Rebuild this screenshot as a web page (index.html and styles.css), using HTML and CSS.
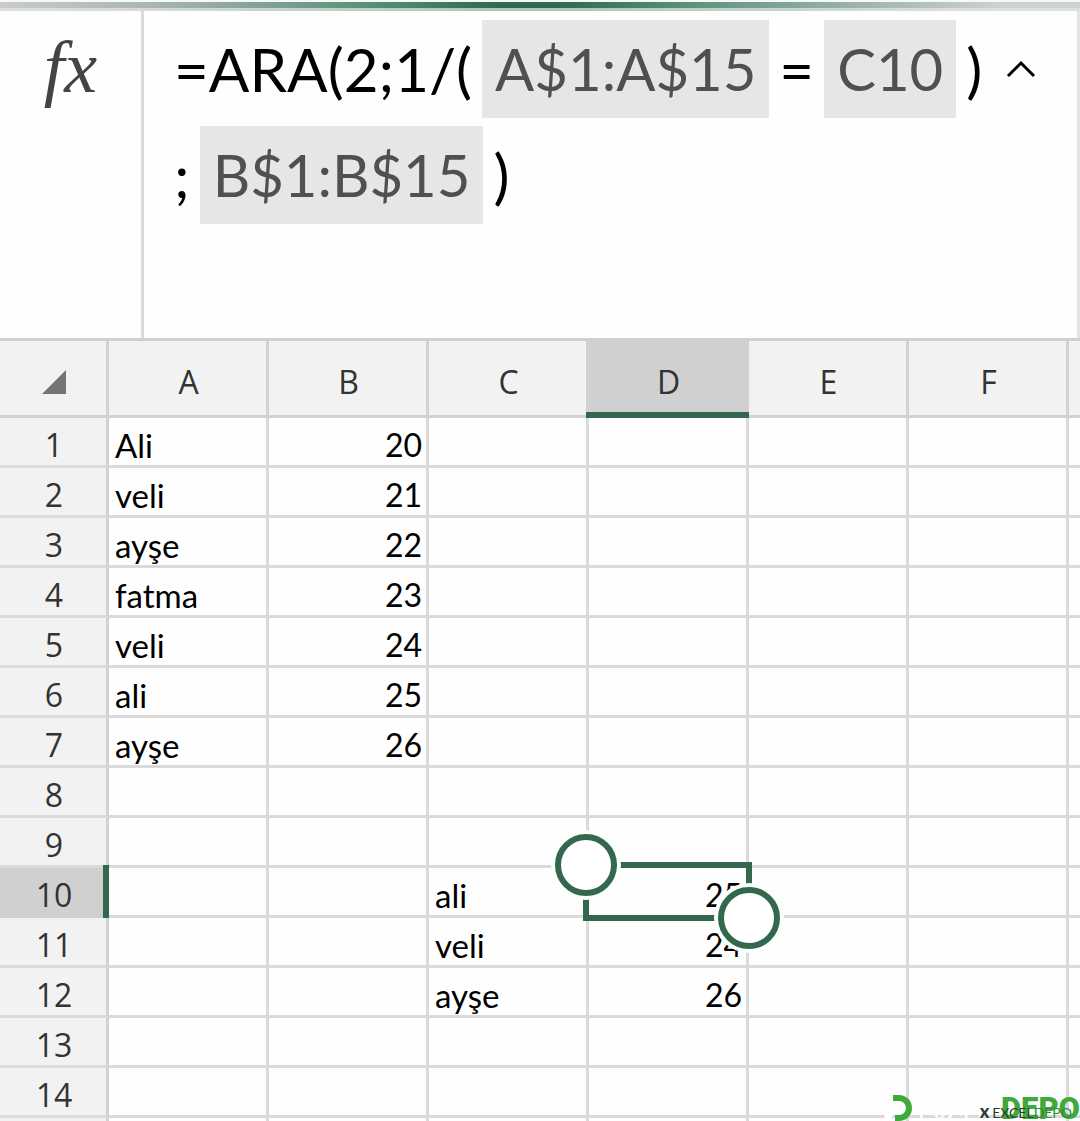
FILE: index.html
```html
<!DOCTYPE html>
<html lang="tr">
<head>
  <meta charset="UTF-8" />
  <meta name="viewport" content="width=device-width, initial-scale=1.0"/>
  <title>Excel - ARA</title>
  <link rel="stylesheet" href="styles.css">
</head>
<body>

  <div class="ribbon-edge"></div>

  <!-- Formula Bar -->
  <div class="formula-bar">
    <div class="fx">fx</div>
    <div class="formula" role="textbox" aria-label="Formül">
      <div class="formula-line">
        <span>=ARA(2;1/(</span>
        <span class="ref">A$1:A$15</span>
        <span>=</span>
        <span class="ref">C10</span>
        <span>)</span>
      </div>
      <div class="formula-line">
        <span>;</span>
        <span class="ref">B$1:B$15</span>
        <span>)</span>
      </div>
    </div>
    <button class="collapse" type="button" aria-label="Daralt">
      <svg width="30" height="18" viewBox="0 0 30 18"><path d="M2 16 L15 3 L28 16" fill="none" stroke="#000" stroke-width="3"/></svg>
    </button>
  </div>

  <!-- Sheet -->
  <table class="sheet">
    <colgroup>
      <col class="col-head">
      <col class="col"><col class="col"><col class="col">
      <col class="col"><col class="col"><col class="col">
      <col>
    </colgroup>
    <thead>
      <tr>
        <th class="corner"><svg width="24" height="24" viewBox="0 0 24 24"><path d="M24 0 V24 H0 Z" fill="#747474"/></svg></th>
        <th scope="col">A</th><th scope="col">B</th><th scope="col">C</th><th scope="col" class="active">D</th><th scope="col">E</th><th scope="col">F</th><th></th>
      </tr>
    </thead>
    <tbody>
      <tr><th scope="row">1</th><td>Ali</td><td class="num">20</td><td></td><td></td><td></td><td></td><td></td></tr>
      <tr><th scope="row">2</th><td>veli</td><td class="num">21</td><td></td><td></td><td></td><td></td><td></td></tr>
      <tr><th scope="row">3</th><td>ayşe</td><td class="num">22</td><td></td><td></td><td></td><td></td><td></td></tr>
      <tr><th scope="row">4</th><td>fatma</td><td class="num">23</td><td></td><td></td><td></td><td></td><td></td></tr>
      <tr><th scope="row">5</th><td>veli</td><td class="num">24</td><td></td><td></td><td></td><td></td><td></td></tr>
      <tr><th scope="row">6</th><td>ali</td><td class="num">25</td><td></td><td></td><td></td><td></td><td></td></tr>
      <tr><th scope="row">7</th><td>ayşe</td><td class="num">26</td><td></td><td></td><td></td><td></td><td></td></tr>
      <tr><th scope="row">8</th><td></td><td></td><td></td><td></td><td></td><td></td><td></td></tr>
      <tr><th scope="row">9</th><td></td><td></td><td></td><td></td><td></td><td></td><td></td></tr>
      <tr>
        <th scope="row" class="active">10</th><td></td><td></td><td>ali</td>
        <td class="num selected">25
          <div class="selection">
            <span class="handle start"></span>
            <span class="handle end"></span>
          </div>
        </td>
        <td></td><td></td><td></td>
      </tr>
      <tr><th scope="row">11</th><td></td><td></td><td>veli</td><td class="num">24</td><td></td><td></td><td></td></tr>
      <tr><th scope="row">12</th><td></td><td></td><td>ayşe</td><td class="num">26</td><td></td><td></td><td></td></tr>
      <tr><th scope="row">13</th><td></td><td></td><td></td><td></td><td></td><td></td><td></td></tr>
      <tr><th scope="row">14</th><td></td><td></td><td></td><td></td><td></td><td></td><td></td></tr>
      <tr><th scope="row"></th><td></td><td></td><td></td><td></td><td></td><td></td><td></td></tr>
    </tbody>
  </table>

  <!-- Watermark -->
  <div class="watermark">
    <svg class="mark-arc" width="28" height="26" viewBox="0 0 28 26">
      <path d="M0 26 L10 15" stroke="#fff" stroke-width="6"/>
      <path d="M9 3 H15 A10 10 0 0 1 15 23 H11" fill="none" stroke="#3fa93c" stroke-width="6"/>
    </svg>
    <span class="mark-ghost">EXCEL</span>
    <span class="mark-big">DEPO</span>
    <span class="mark-small"><b>x</b>EXCEL<i>DEPO</i></span>
  </div>

</body>
</html>
```
FILE: styles.css
```css
* {
  box-sizing: border-box;
}

body {
  margin: 0;
  height: 100vh;
  overflow: hidden;
  position: relative;
  font-family: Lato, 'Liberation Sans', sans-serif;
  background-color: #fefefe;
  color: #000;
}

.ribbon-edge {
  height: 11px;
  border-top: 2px solid #f4faf7;
  background:
    linear-gradient(rgba(255, 255, 255, 0) 6px, rgba(225, 235, 230, 0.7) 6px),
    linear-gradient(90deg, #cbcbcb 0%, #a9b3ae 15%, #5e927b 33%, #2f6b50 46%, #2f6b50 52%, #5e927b 64%, #a9b8b1 82%, #d0d2d0 93%);
}

/* Formula bar */
.formula-bar {
  display: flex;
  align-items: flex-start;
  height: 327px;
  border-right: 3px solid #e4e4e4;
}

.fx {
  width: 144px;
  height: 100%;
  flex-shrink: 0;
  padding-top: 16px;
  border-right: 3px solid #dadcdb;
  font-family: 'Liberation Serif', serif;
  font-size: 74px;
  line-height: 80px;
  font-style: italic;
  text-align: center;
  color: #444;
}

.formula {
  flex: 1;
  display: flex;
  flex-direction: column;
  gap: 8px;
  padding: 9px 0 0 30px;
  font-size: 60px;
  line-height: 98px;
  white-space: nowrap;
}

.formula-line {
  display: flex;
  gap: 10px;
}

.ref {
  padding: 0 13px;
  background: #e6e6e6;
  color: #505050;
  font-size: 58px;
}

.collapse {
  margin: 49px 41px 0 0;
  padding: 0;
  border: 0;
  background: none;
  line-height: 0;
}

/* Sheet */
.sheet {
  width: 100%;
  table-layout: fixed;
  border-collapse: separate;
  border-spacing: 0;
  border-top: 3px solid #d0d0d0;
  font-size: 33px;
  line-height: 40px;
}

.col-head {
  width: 109px;
}

.col {
  width: 160px;
}

.sheet th,
.sheet td {
  height: 50px;
  padding: 6px 4px 0 6px;
  border-right: 3px solid #dadada;
  border-bottom: 3px solid #dadada;
  text-align: left;
  white-space: nowrap;
}

.sheet th {
  position: relative;
  padding: 6px 0 0 2px;
  border-color: #d2d2d2;
  background: #f2f2f2;
  color: #333;
  font-family: 'Open Sans', sans-serif;
  font-size: 32px;
  font-weight: 400;
  text-align: center;
}

.sheet tbody th {
  border-bottom-color: #dadada;
}

.sheet thead th {
  height: 77px;
  padding-top: 8px;
}

.sheet th:last-child,
.sheet td:last-child {
  border-right: 0;
}

.sheet .num {
  font-size: 32px;
  text-align: right;
}

.corner svg {
  display: block;
  margin: 0 auto;
}

.sheet th.active {
  border-color: #d0d0d0;
  background: #d0d0d0;
}

.active::after {
  content: '';
  position: absolute;
  background: #33684f;
}

thead .active::after {
  left: -3px;
  right: -3px;
  bottom: -3px;
  height: 6px;
}

tbody .active::after {
  top: -3px;
  right: -3px;
  bottom: -3px;
  width: 6px;
}

/* Selected cell */
.selected {
  position: relative;
}

.selection {
  position: absolute;
  inset: -6px;
  border: 6px solid #33684f;
}

.handle {
  position: absolute;
  width: 62px;
  height: 62px;
  border: 6px solid #33684f;
  border-radius: 50%;
  background: #fff;
  box-shadow: 0 0 0 4px #fafffc;
}

.handle.start {
  top: -34px;
  left: -34px;
}

.handle.end {
  right: -34px;
  bottom: -34px;
}

/* Watermark */
.watermark {
  position: absolute;
  right: 0;
  bottom: 0;
  display: flex;
  align-items: flex-end;
  width: 196px;
  height: 26px;
  line-height: 26px;
}

.mark-ghost {
  margin: 0 0 -12px 6px;
  font-size: 24px;
  color: #fff;
}

.mark-small {
  position: absolute;
  right: 8px;
  bottom: -4px;
  font-size: 14px;
  line-height: 24px;
  color: #2c3a34;
}

.mark-small b {
  margin-right: 3px;
  font-size: 18px;
  font-weight: 900;
}

.mark-small i {
  font-style: normal;
  color: #2f8a3a;
}

.mark-big {
  position: absolute;
  right: 0;
  bottom: -1px;
  font-family: Roboto, sans-serif;
  font-size: 31px;
  font-weight: 900;
  color: #3fa93c;
}
```
